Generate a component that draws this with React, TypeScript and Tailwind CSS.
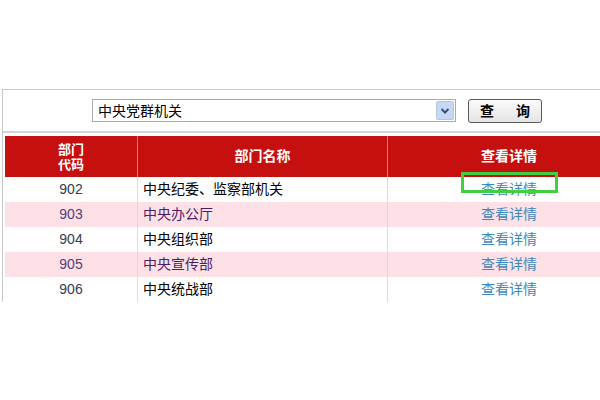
import React from "react";

const rows = [
  { code: "902", name: "中央纪委、监察部机关", pink: false },
  { code: "903", name: "中央办公厅", pink: true },
  { code: "904", name: "中央组织部", pink: false },
  { code: "905", name: "中央宣传部", pink: true },
  { code: "906", name: "中央统战部", pink: false },
];

export default function App() {
  return (
    <div
      className="w-[600px] h-[400px] bg-white pt-[89px] overflow-hidden"
      style={{ fontFamily: '"Liberation Sans", "Noto Sans CJK SC", sans-serif' }}
    >
      <div className="ml-[2px] w-[640px] border-l border-t border-[#c8c8c8]">
        <div className="h-[43px] flex items-center border-b-2 border-[#d4d4d4]">
          <div className="ml-[89px] w-[364px] h-[23px] border border-[#a5acb5] bg-white flex items-center">
            <span className="flex-1 pl-[5px] text-[14px] leading-none text-black">中央党群机关</span>
            <div className="w-[18px] h-[19px] mr-[1px] bg-[#c7d8f4] border border-[#b4c6e6] rounded-[2px] flex items-center justify-center">
              <svg width="10" height="8" viewBox="0 0 10 8">
                <path d="M1.5 2 L5 5.5 L8.5 2" stroke="#3b4f7a" strokeWidth="2" fill="none" />
              </svg>
            </div>
          </div>
          <button className="ml-[12px] w-[74px] h-[24px] border border-[#5a5a5a] rounded-[3px] bg-gradient-to-b from-[#fbfbfb] to-[#e4e4e4] text-[14px] font-bold text-black flex items-center justify-center gap-[22px] leading-none">
            <span>查</span>
            <span>询</span>
          </button>
        </div>
        <div className="pt-[3px] pl-[2px]">
          <div className="flex h-[41px] bg-[#c5100f] text-white font-bold text-[13px]">
            <div className="w-[133px] border-r border-[#e27a7a] flex flex-col items-center justify-center leading-[15px]">
              <span>部门</span>
              <span>代码</span>
            </div>
            <div className="w-[250px] border-r border-[#e27a7a] flex items-center justify-center text-[14px]">部门名称</div>
            <div className="w-[242px] flex items-center justify-center text-[14px]">查看详情</div>
          </div>
          {rows.map((r, i) => (
            <div key={r.code} className={`flex h-[25px] text-[14px] ${r.pink ? "bg-[#fde1e6]" : "bg-white"}`}>
              <div className={`w-[133px] border-r border-[#dcdcdc] flex items-center justify-center ${r.pink ? "text-[#5b3a78]" : "text-[#3a3a48]"}`}>
                {r.code}
              </div>
              <div className={`w-[250px] border-r border-[#dcdcdc] flex items-center pl-[5px] ${r.pink ? "text-[#4a1d68]" : "text-black"}`}>
                {r.name}
              </div>
              <div className="w-[242px] flex items-center justify-center relative text-[#3d88bd]">
                <span>查看详情</span>
                {i === 0 && (
                  <div className="absolute left-[73px] top-[-5px] w-[97px] h-[21px] border-[3px] border-[#3fcf3f]" />
                )}
              </div>
            </div>
          ))}
        </div>
      </div>
    </div>
  );
}
